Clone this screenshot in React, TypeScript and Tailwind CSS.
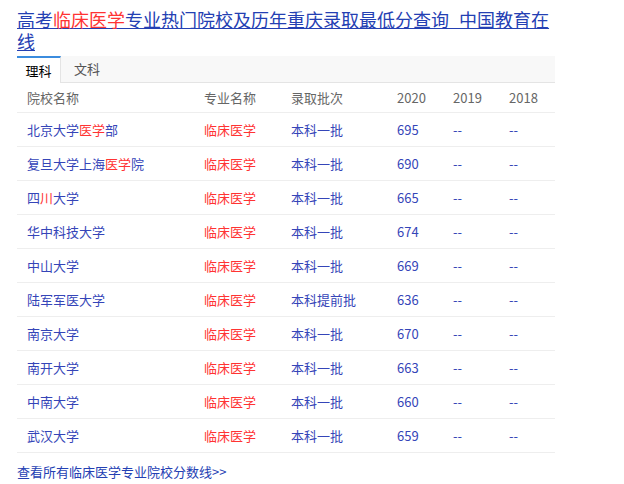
import React from "react";

const rows: [React.ReactNode, string, string][] = [
  [<>北京大学<span className="text-[#f33]">医学</span>部</>, "本科一批", "695"],
  [<>复旦大学上海<span className="text-[#f33]">医学</span>院</>, "本科一批", "690"],
  [<>四<span className="text-[#f33]">川</span>大学</>, "本科一批", "665"],
  [<>华中科技大学</>, "本科一批", "674"],
  [<>中山大学</>, "本科一批", "669"],
  [<>陆军军医大学</>, "本科提前批", "636"],
  [<>南京大学</>, "本科一批", "670"],
  [<>南开大学</>, "本科一批", "663"],
  [<>中南大学</>, "本科一批", "660"],
  [<>武汉大学</>, "本科一批", "659"],
];

export default function App() {
  const f = { fontFamily: '"Microsoft YaHei","Noto Sans CJK SC",sans-serif' };
  return (
    <div className="w-[624px] h-[484px] bg-white pl-[17px] pt-[8px]" style={f}>
      <div className="w-[538px]">
        <a className="block text-[18px] leading-[22px] text-[#2440b3] underline">
          高考<span className="text-[#f33]">临床医学</span>专业热门院校及历年重庆录取最低分查询_中国教育在线
        </a>
        <div className="mt-[4px] flex h-[27px] border-b border-[#e4e4e4] bg-[#f8f8f8] text-[13px]">
          <div className="w-[44px] border-t-2 border-t-[#3b8cde] border-r border-[#e4e4e4] bg-white flex items-center justify-center text-black -mb-px">理科</div>
          <div className="w-[52px] flex items-center justify-center text-[#555]">文科</div>
        </div>
        <div className="flex h-[30px] items-center text-[13px] text-[#666] border-b border-[#eee]">
          <div className="w-[187px] pl-[10px]">院校名称</div>
          <div className="w-[87px]">专业名称</div>
          <div className="w-[106px]">录取批次</div>
          <div className="w-[56px]">2020</div>
          <div className="w-[56px]">2019</div>
          <div>2018</div>
        </div>
        {rows.map(([n, b, s], i) => (
          <div key={i} className="flex h-[34px] items-center text-[13px] text-[#3545b8] border-b border-[#eee]">
            <div className="w-[187px] pl-[10px]">{n}</div>
            <div className="w-[87px] text-[#f33]">临床医学</div>
            <div className="w-[106px]">{b}</div>
            <div className="w-[56px]">{s}</div>
            <div className="w-[56px]">--</div>
            <div>--</div>
          </div>
        ))}
        <div className="mt-[10px] text-[13px] leading-[18px] text-[#2440b3]">查看所有临床医学专业院校分数线&gt;&gt;</div>
      </div>
    </div>
  );
}
